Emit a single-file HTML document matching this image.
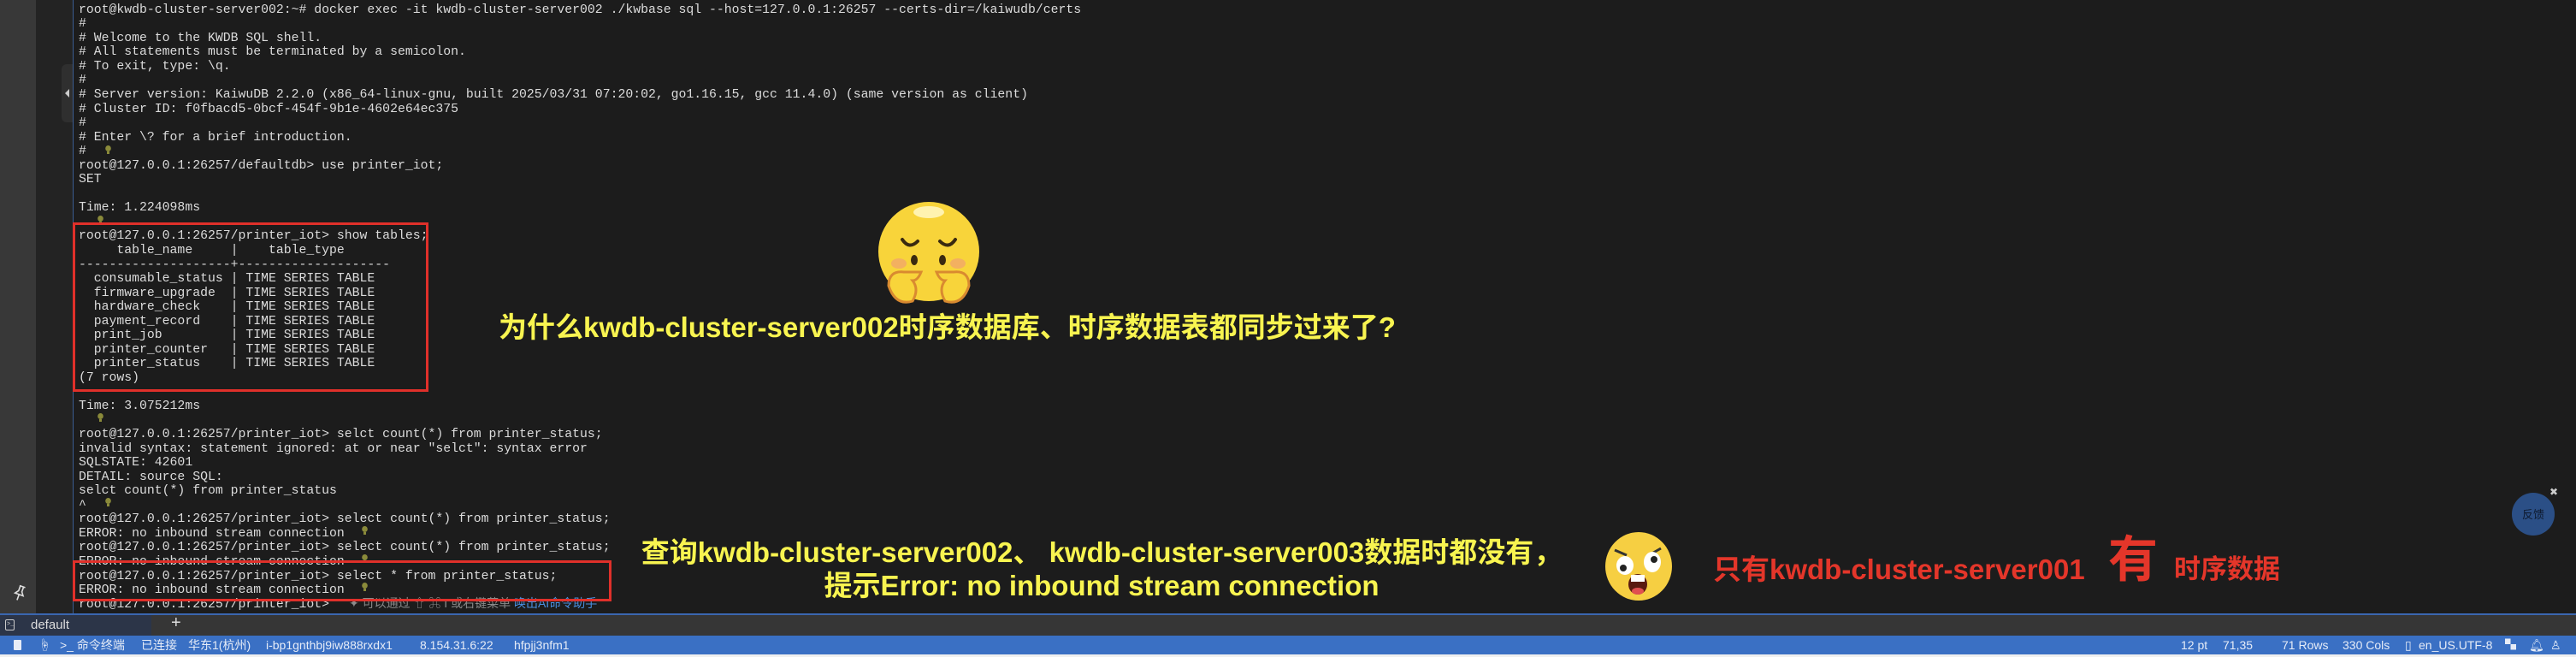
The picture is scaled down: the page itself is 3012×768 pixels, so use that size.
<!DOCTYPE html>
<html><head><meta charset="utf-8"><style>
*{margin:0;padding:0;box-sizing:border-box}
body{width:3012px;height:768px;background:#1c1c1c;position:relative;overflow:hidden;font-family:"Liberation Mono","DejaVu Sans Mono",monospace}
.abs{position:absolute}
pre{position:absolute;left:92px;top:3.7px;font-family:"Liberation Mono",monospace;font-size:14.8px;line-height:16.55px;color:#dcdcdc;white-space:pre}
.bulb{position:absolute;width:7px;height:11px}
.cjk{font-family:"Liberation Sans","Noto Sans CJK SC",sans-serif;font-weight:bold;white-space:nowrap}
.y{color:#f8f450}
.r{color:#e4362a}
.st{position:absolute;top:743px;height:22px;line-height:22px;font-family:"Liberation Sans","Noto Sans CJK SC",sans-serif;font-size:14px;color:#e6ecf7;white-space:nowrap}
</style></head><body>
<div class="abs" style="left:0;top:0;width:42px;height:718px;background:#383838"></div>
<div class="abs" style="left:42px;top:0;width:43px;height:718px;background:#232323"></div>
<div class="abs" style="left:72px;top:75px;width:13px;height:68px;background:#2f2f2f;border-radius:6px 0 0 6px"></div>
<div class="abs" style="left:76px;top:104px;width:0;height:0;border-top:5px solid transparent;border-bottom:5px solid transparent;border-right:5px solid #ccc"></div>
<div class="abs" style="left:85px;top:0;width:1px;height:718px;background:#3b5d91"></div>
<svg class="abs" style="left:14px;top:683px" width="18" height="20" viewBox="0 0 18 20"><path d="M6 2h7M7 2v6l-3 4h10l-3-4V2M9 12v7" stroke="#ddd" stroke-width="1.6" fill="none" transform="rotate(20 9 10)"/></svg>

<pre>root@kwdb-cluster-server002:~# docker exec -it kwdb-cluster-server002 ./kwbase sql --host=127.0.0.1:26257 --certs-dir=/kaiwudb/certs
#
# Welcome to the KWDB SQL shell.
# All statements must be terminated by a semicolon.
# To exit, type: \q.
#
# Server version: KaiwuDB 2.2.0 (x86_64-linux-gnu, built 2025/03/31 07:20:02, go1.16.15, gcc 11.4.0) (same version as client)
# Cluster ID: f0fbacd5-0bcf-454f-9b1e-4602e64ec375
#
# Enter \? for a brief introduction.
#
root@127.0.0.1:26257/defaultdb> use printer_iot;
SET

Time: 1.224098ms

root@127.0.0.1:26257/printer_iot> show tables;
     table_name     |    table_type
--------------------+--------------------
  consumable_status | TIME SERIES TABLE
  firmware_upgrade  | TIME SERIES TABLE
  hardware_check    | TIME SERIES TABLE
  payment_record    | TIME SERIES TABLE
  print_job         | TIME SERIES TABLE
  printer_counter   | TIME SERIES TABLE
  printer_status    | TIME SERIES TABLE
(7 rows)

Time: 3.075212ms

root@127.0.0.1:26257/printer_iot> selct count(*) from printer_status;
invalid syntax: statement ignored: at or near "selct": syntax error
SQLSTATE: 42601
DETAIL: source SQL:
selct count(*) from printer_status
^
root@127.0.0.1:26257/printer_iot> select count(*) from printer_status;
ERROR: no inbound stream connection
root@127.0.0.1:26257/printer_iot> select count(*) from printer_status;
ERROR: no inbound stream connection
root@127.0.0.1:26257/printer_iot> select * from printer_status;
ERROR: no inbound stream connection
root@127.0.0.1:26257/printer_iot></pre>
<div class="abs" style="left:408px;top:695px;font-family:'Liberation Sans','Noto Sans CJK SC',sans-serif;font-size:14px;color:#8a8a8a;white-space:nowrap">✦ 可以通过 ⇧ ⌘ I 或右键菜单 <span style="color:#4a8fe0">唤出AI命令助手</span></div>

<svg class="bulb" style="left:123px;top:170px" viewBox="0 0 7 11"><ellipse cx="3.5" cy="3.5" rx="3.3" ry="3.5" fill="#8a8a3a"/><rect x="2" y="7" width="3" height="3" fill="#8a8a3a"/></svg>
<svg class="bulb" style="left:114px;top:252px" viewBox="0 0 7 11"><ellipse cx="3.5" cy="3.5" rx="3.3" ry="3.5" fill="#8a8a3a"/><rect x="2" y="7" width="3" height="3" fill="#8a8a3a"/></svg>
<svg class="bulb" style="left:114px;top:483px" viewBox="0 0 7 11"><ellipse cx="3.5" cy="3.5" rx="3.3" ry="3.5" fill="#8a8a3a"/><rect x="2" y="7" width="3" height="3" fill="#8a8a3a"/></svg>
<svg class="bulb" style="left:123px;top:582px" viewBox="0 0 7 11"><ellipse cx="3.5" cy="3.5" rx="3.3" ry="3.5" fill="#8a8a3a"/><rect x="2" y="7" width="3" height="3" fill="#8a8a3a"/></svg>
<svg class="bulb" style="left:423px;top:615px" viewBox="0 0 7 11"><ellipse cx="3.5" cy="3.5" rx="3.3" ry="3.5" fill="#8a8a3a"/><rect x="2" y="7" width="3" height="3" fill="#8a8a3a"/></svg>
<svg class="bulb" style="left:423px;top:648px" viewBox="0 0 7 11"><ellipse cx="3.5" cy="3.5" rx="3.3" ry="3.5" fill="#8a8a3a"/><rect x="2" y="7" width="3" height="3" fill="#8a8a3a"/></svg>
<svg class="bulb" style="left:423px;top:681px" viewBox="0 0 7 11"><ellipse cx="3.5" cy="3.5" rx="3.3" ry="3.5" fill="#8a8a3a"/><rect x="2" y="7" width="3" height="3" fill="#8a8a3a"/></svg>

<div class="abs" style="left:85px;top:260px;width:416px;height:198px;border:3.5px solid #e0302a"></div>
<div class="abs" style="left:85px;top:655px;width:630px;height:48px;border:3.5px solid #e0302a"></div>

<div class="abs cjk y" style="left:583px;top:362px;font-size:33px;line-height:42px">为什么kwdb-cluster-server002时序数据库、时序数据表都同步过来了?</div>
<div class="abs cjk y" style="left:1288px;top:626px;transform:translateX(-50%);text-align:center;font-size:33px;line-height:39px">查询kwdb-cluster-server002、 kwdb-cluster-server003数据时都没有，<br>提示Error: no inbound stream connection</div>
<div class="abs cjk r" style="left:2003px;top:646px;font-size:33px;line-height:40px">只有kwdb-cluster-server001</div>
<div class="abs cjk r" style="left:2465px;top:622px;font-size:58px;line-height:66px">有</div>
<div class="abs cjk r" style="left:2542px;top:646px;font-size:31px;line-height:40px">时序数据</div>

<svg class="abs" style="left:1025px;top:234px" width="122" height="124" viewBox="0 0 122 124">
<ellipse cx="61" cy="60" rx="59" ry="58" fill="#f8d43a"/>
<ellipse cx="61" cy="14" rx="18" ry="7" fill="#fff3b0"/>
<path d="M30 46q8 12 18 2M74 48q10 10 18-2" stroke="#3a2a10" stroke-width="4" fill="none" stroke-linecap="round"/>
<ellipse cx="44" cy="70" rx="4" ry="6" fill="#3a2a10"/><ellipse cx="77" cy="70" rx="4" ry="6" fill="#3a2a10"/>
<ellipse cx="26" cy="74" rx="9" ry="6" fill="#f3b060"/><ellipse cx="95" cy="74" rx="9" ry="6" fill="#f3b060"/>
<path d="M14 100q0-18 18-16h20q-4 10-10 10q8 10 0 24q-20 6-28-18zM108 100q0-18-18-16H70q4 10 10 10q-8 10 0 24q20 6 28-18z" fill="#f8d43a" stroke="#d98a30" stroke-width="3"/>
</svg>
<svg class="abs" style="left:1876px;top:621px" width="80" height="82" viewBox="0 0 80 82">
<ellipse cx="40" cy="41" rx="39" ry="40" fill="#f6cf42"/>
<path d="M12 22l14 6M52 28l14-8" stroke="#333" stroke-width="3" fill="none"/>
<ellipse cx="24" cy="40" rx="10" ry="11" fill="#fff"/><ellipse cx="56" cy="36" rx="10" ry="12" fill="#fff"/>
<circle cx="22" cy="43" r="4" fill="#222"/><circle cx="58" cy="33" r="4" fill="#222"/>
<ellipse cx="39" cy="62" rx="11" ry="12" fill="#5a1a10"/><rect x="31" y="51" width="16" height="8" fill="#fff"/><ellipse cx="39" cy="70" rx="7" ry="4" fill="#e05050"/>
</svg>

<div class="abs" style="left:2937px;top:576px;width:50px;height:50px;border-radius:50%;background:#2b4f86;color:#0e1a2e;font-family:'Noto Sans CJK SC',sans-serif;font-size:13px;line-height:50px;text-align:center">反馈</div>
<div class="abs" style="left:2981px;top:568px;color:#ccc;font-size:12px;font-family:'Liberation Sans',sans-serif">✖</div>

<div class="abs" style="left:0;top:717px;width:3012px;height:2px;background:#3a66b0"></div>
<div class="abs" style="left:0;top:719px;width:3012px;height:24px;background:#363636"></div>
<div class="abs" style="left:0;top:719px;width:177px;height:24px;background:#2c3548"></div>
<div class="abs" style="left:6px;top:724px;width:11px;height:13px;border:1.3px solid #ccc;border-radius:2px;font-size:7px;color:#ccc;line-height:10px;padding-left:1px">&gt;_</div>
<div class="abs" style="left:36px;top:719px;line-height:24px;font-family:'Liberation Sans',sans-serif;font-size:15px;color:#ddd">default</div>
<div class="abs" style="left:200px;top:716px;line-height:24px;font-family:'Liberation Sans',sans-serif;font-size:20px;color:#ddd">+</div>

<div class="abs" style="left:0;top:743px;width:3012px;height:22px;background:#3a70c4"></div>
<div class="abs" style="left:0;top:765px;width:3012px;height:3px;background:#f0f0f0"></div>
<div class="abs" style="left:16px;top:748px;width:9px;height:12px;background:#e6ecf7;border-radius:1px"></div>
<div class="st" style="left:45px">☝</div>
<div class="st" style="left:70px">&gt;_&nbsp;命令终端</div>
<div class="st" style="left:165px">已连接</div>
<div class="st" style="left:220px">华东1(杭州)</div>
<div class="st" style="left:311px">i-bp1gnthbj9iw888rxdx1</div>
<div class="st" style="left:491px">8.154.31.6:22</div>
<div class="st" style="left:601px">hfpjj3nfm1</div>
<div class="st" style="left:2550px">12 pt</div>
<div class="st" style="left:2599px">71,35</div>
<div class="st" style="left:2668px">71 Rows</div>
<div class="st" style="left:2739px">330 Cols</div>
<div class="st" style="left:2812px">▯</div>
<div class="st" style="left:2828px">en_US.UTF-8</div>
<div class="st" style="left:2929px;font-size:13px">▚</div>
<div class="st" style="left:2957px">🔔︎</div>
<div class="st" style="left:2982px">♙</div>
</body></html>
